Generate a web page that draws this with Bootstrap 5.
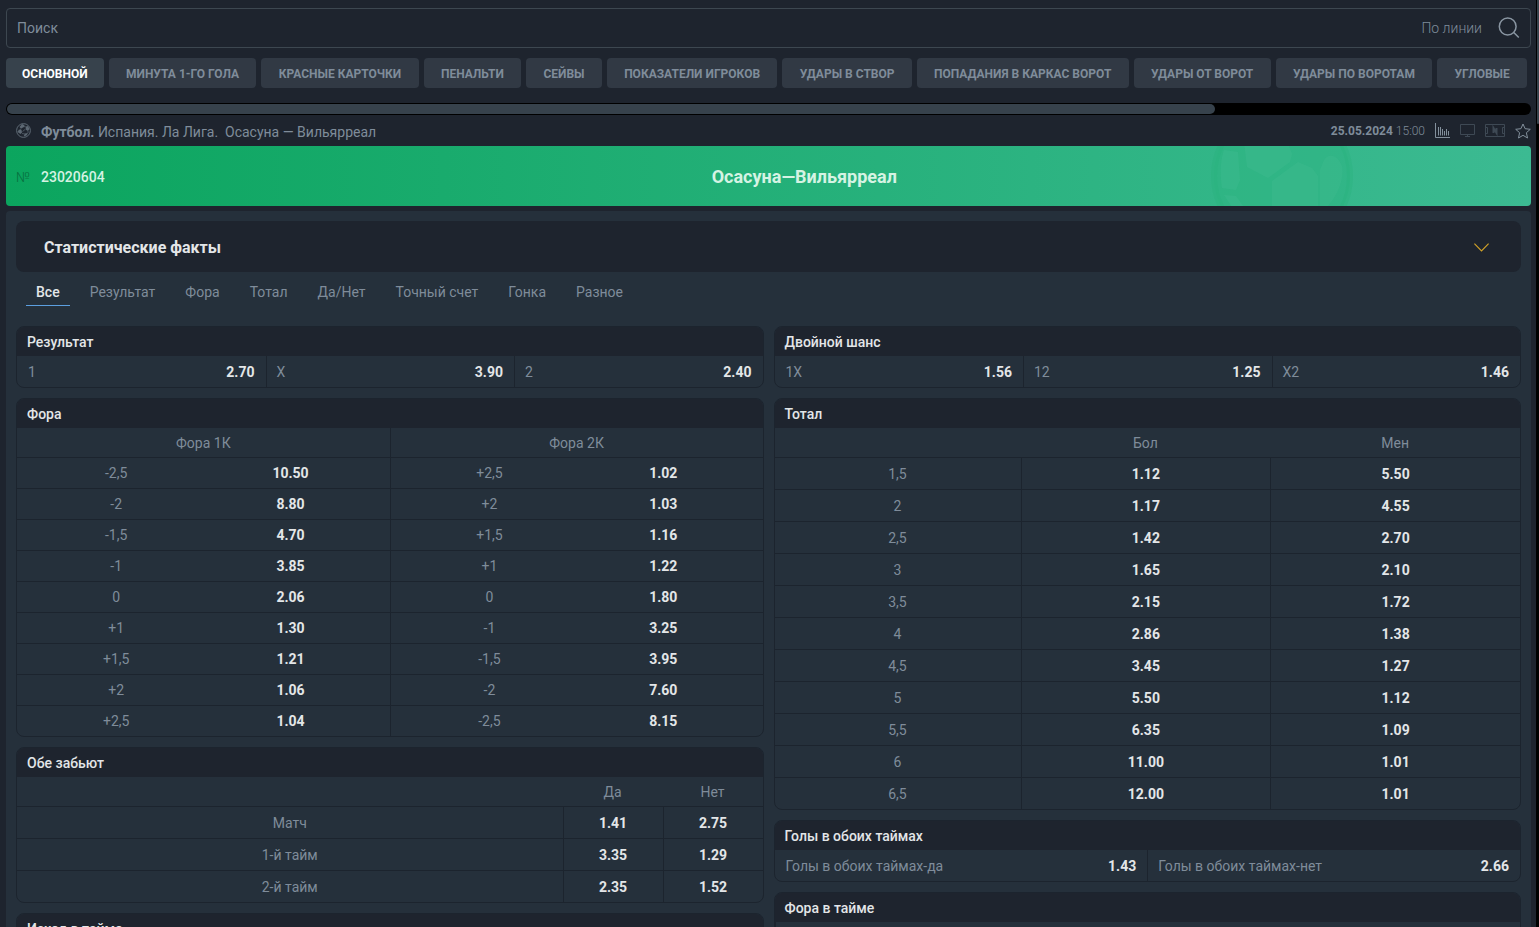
<!DOCTYPE html>
<html lang="ru">
<head>
<meta charset="utf-8">
<meta name="viewport" content="width=device-width, initial-scale=1">
<title>Осасуна — Вильярреал</title>
<link href="https://cdn.jsdelivr.net/npm/bootstrap@5.3.0/dist/css/bootstrap.min.css" rel="stylesheet">
<style>
:root{--page:#1e242e;--panel:#25303b;--line:#1c242e;--muted:#7f8c9a;--bright:#e3e6e8}
body{background:var(--page);color:var(--muted);font-family:Roboto,sans-serif;font-size:14px;line-height:20px}
button{font-family:inherit}
.scroller{overflow-y:auto;scrollbar-width:none;padding:8px 5px 0 6px;min-width:0}
.scroller::-webkit-scrollbar{display:none}
.page-track{flex:none;width:3px;background:#000;padding-left:1px}
.page-thumb{height:124px;background:#37424c;border-radius:0 0 2px 2px}
.search-box{height:40px;border:1px solid #3d4750;border-radius:4px;padding:0 10px}
.search-box input{background:none;border:0;outline:0;color:var(--muted);padding:0}
.search-box input::placeholder{color:var(--muted);opacity:1}
.plain-btn{background:none;border:0;padding:0;color:inherit;display:flex;align-items:center}
.market-tabs{gap:5px;margin-top:10px;padding-right:4px;overflow:hidden}
.market-tabs button{flex:1 0 auto;height:30px;padding:1px 16px 0;border:0;border-radius:4px;background:#313944;color:var(--muted);font-size:12px;font-weight:700;text-transform:uppercase}
.market-tabs button.active{flex-grow:0;background:#37424c;color:#fff}
.tab-track{height:12px;margin-top:15px;padding:1px;background:#000;border-radius:6px}
.tab-thumb{height:10px;background:#37424c;border-radius:5px}
.event-line{height:31px;padding-left:10px;gap:10px}
.event-name{padding-top:2px}
.event-date{font-size:12px}
.banner{height:60px;border-radius:4px;background:linear-gradient(90deg,#0ba55e,#3cba92);padding:2px 27px 0 10px;position:relative;overflow:hidden;color:#d5f3e3}
.banner .num-sign{width:25px;color:#07703f;font-weight:300}
.banner .event-num{font-weight:500}
.banner h1{font-size:18px;line-height:24px;font-weight:700}
.banner svg{position:absolute;right:177px;top:-42px}
.event-panel{background:var(--panel);border-radius:4px;margin-top:5px;padding:10px}
.facts{height:51px;border-radius:8px;background:var(--page);padding:2px 32px 0 28px;width:100%;border:0;color:var(--bright);font-size:16px;font-weight:700}
.filters{gap:10px;margin:10px 10px 20px}
.filters a{height:24px;padding:0 10px;color:var(--muted);text-decoration:none;border-bottom:1px solid transparent}
.filters a.active{color:var(--bright);font-weight:500;border-bottom-color:#5c9fe0}
.columns{--bs-gutter-x:10px}
.stack{row-gap:10px}
.market{border:1px solid var(--line);border-radius:8px;overflow:hidden}
.market h2{height:29px;background:var(--page);color:var(--bright);font-size:14px;font-weight:500;line-height:30px;padding-left:10px;margin:0}
.outcome{flex:1 1 0;height:31px;border:0;border-left:1px solid var(--line);background:none;color:var(--muted);padding:0 11px 0 10px}
.outcome:first-child{border-left:0;padding-left:11px}
.odds{width:100%;table-layout:fixed;text-align:center;border-collapse:separate;border-spacing:0}
.odds th{font-weight:400;padding:0}
.odds td{padding:0;color:var(--bright);font-weight:700}
.outcome b{color:var(--bright);font-weight:700}
.odds thead th{height:30px}
.odds tr>*{height:32px;border-bottom:1px solid var(--line)}
.odds tbody tr:last-child>*{border-bottom:0;height:31px}
.divided tbody td{border-left:1px solid var(--line)}
.handicap tbody tr>*{height:31px}
.handicap tbody tr:last-child>*{height:30px}
.handicap tbody tr>:nth-child(1),.handicap tbody tr>:nth-child(3){padding-left:12px}
.handicap tbody tr>:nth-child(2),.handicap tbody tr>:nth-child(4){padding-right:12px}
.handicap tbody tr>:nth-child(3),.handicap thead th:nth-child(2){border-left:1px solid var(--line)}
.col-odd{width:100px}
.col-line{width:33%}
</style>
</head>
<body>
<div class="d-flex vh-100 overflow-hidden">
<div class="scroller flex-grow-1">
  <form class="search-box d-flex align-items-center">
    <input class="flex-grow-1" type="text" placeholder="Поиск" aria-label="Поиск">
    <button type="button" class="plain-btn fw-light">По линии</button>
    <button type="button" class="plain-btn ms-3" aria-label="Найти"><svg width="22" height="22" viewBox="0 0 22 22" fill="none" stroke="#8995a1" stroke-width="1.5"><circle cx="9.700" cy="9.500" r="8.400"/><path d="M15.800 15.500 20.800 20.500"/></svg></button>
  </form>
  <div class="market-tabs d-flex">
    <button type="button" class="active">Основной</button><button type="button">Минута 1-го гола</button><button type="button">Красные карточки</button><button type="button">Пенальти</button><button type="button">Сейвы</button><button type="button">Показатели игроков</button><button type="button">Удары в створ</button><button type="button">Попадания в каркас ворот</button><button type="button">Удары от ворот</button><button type="button">Удары по воротам</button><button type="button">Угловые</button>
  </div>
  <div class="tab-track"><div class="tab-thumb" style="width:79.3%"></div></div>
  <div class="event-line d-flex align-items-center">
    <svg width="15" height="15" viewBox="0 0 15 15" fill="none" stroke="#5d6873"><circle cx="7.500" cy="7.500" r="6.900"/><path fill="#5d6873" stroke="none" d="M6 1 8.500 2 8 4 5 5.500 3.500 4zM10 3.500 12 3 13.500 6 12 8 9.500 6.500zM3 6.500 5.500 7 6 9.500 4.500 11 1.500 9zM9 10.500l3-.5-1.500 2.500-3 1z"/><path stroke-width=".7" d="M8 3.500 10 4M5 5.500 4.500 7M9 6.500 6.500 8.500M6 10.500 9 11M12 8v2"/></svg>
    <div class="event-name flex-grow-1"><b>Футбол.</b> Испания. Ла Лига.&nbsp; Осасуна — Вильярреал</div>
    <div class="event-date"><b>25.05.2024</b> <span class="fw-light">15:00</span></div>
    <svg width="15" height="15" viewBox="0 0 15 15" fill="none" stroke="#83909c"><path d="M.5 0v14.500H15M3.500 4v8.500M5.500 4v8.500M7.500 6v6.500M9.500 8v4.500M11.500 6v6.500M13.500 8v4.500"/></svg>
    <svg width="15" height="15" viewBox="0 0 15 15" fill="none" stroke="#3e4954"><path d="M.5 1.500h14v10H.5zM5 13.500h5M7.500 11.500v2"/></svg>
    <svg width="20" height="15" viewBox="0 0 20 15" fill="none" stroke="#3e4954"><path d="M.5 1.500h19v12H.5zM.5 4.500h2v6h-2M19.500 4.500h-2v6h2"/><path stroke-width="2" d="M8.500 10V5l3 5V5"/></svg>
    <button type="button" class="plain-btn" aria-label="В избранное"><svg width="16" height="16" viewBox="0 0 16 16" fill="none" stroke="#83909c"><path d="M8 1 10.100 5.700 15.300 6.300 11.400 9.700 12.500 15 8 12.300 3.500 15 4.600 9.700.7 6.300 5.900 5.700z"/></svg></button>
  </div>
  <div class="banner d-flex align-items-center">
    <svg width="144" height="144" viewBox="0 0 144 144" fill="none"><circle cx="72" cy="72" r="68" fill="#2cb481" fill-opacity=".45" stroke="#27b27b" stroke-opacity=".35" stroke-width="6"/><g fill="#3bb98c" fill-opacity=".6"><path d="M34 38 76 34 82 50 80 58 58 74 37 63zM62 77 88 58 102 64 108 72 108 106 92 112 62 106zM114 56C120 48 128 52 132 62 134 72 130 88 118 102L110 104 110 66zM14 46 28 48 30 76 26 86 12 84C10 70 10 58 14 46zM14 91 26 92 36 106 28 112zM30 24C44 12 60 8 78 9L82 25 38 34z"/></g></svg>
    <span class="num-sign">№</span><span class="event-num">23020604</span>
    <h1 class="flex-grow-1 text-center mb-0">Осасуна—Вильярреал</h1>
  </div>
  <main class="event-panel">
    <button type="button" class="facts d-flex align-items-center justify-content-between">Статистические факты <svg width="15" height="9" viewBox="0 0 15 9" fill="none" stroke="#d0a128" stroke-width="1.200"><path d="M.4.6 7.500 7.800 14.600.6"/></svg></button>
    <nav class="filters d-flex">
      <a class="active" href="#">Все</a><a href="#">Результат</a><a href="#">Фора</a><a href="#">Тотал</a><a href="#">Да/Нет</a><a href="#">Точный счет</a><a href="#">Гонка</a><a href="#">Разное</a>
    </nav>
    <div class="row columns">
      <div class="col-6 d-grid align-content-start stack">
        <section class="market"><h2>Результат</h2><div class="d-flex">
          <button class="outcome d-flex align-items-center justify-content-between">1 <b>2.70</b></button><button class="outcome d-flex align-items-center justify-content-between">X <b>3.90</b></button><button class="outcome d-flex align-items-center justify-content-between">2 <b>2.40</b></button></div></section>
        <section class="market"><h2>Фора</h2><table class="odds handicap">
          <thead><tr><th colspan="2">Фора 1К</th><th colspan="2">Фора 2К</th></tr></thead>
          <tbody>
          <tr><th>-2,5</th><td>10.50</td><th>+2,5</th><td>1.02</td></tr>
          <tr><th>-2</th><td>8.80</td><th>+2</th><td>1.03</td></tr>
          <tr><th>-1,5</th><td>4.70</td><th>+1,5</th><td>1.16</td></tr>
          <tr><th>-1</th><td>3.85</td><th>+1</th><td>1.22</td></tr>
          <tr><th>0</th><td>2.06</td><th>0</th><td>1.80</td></tr>
          <tr><th>+1</th><td>1.30</td><th>-1</th><td>3.25</td></tr>
          <tr><th>+1,5</th><td>1.21</td><th>-1,5</th><td>3.95</td></tr>
          <tr><th>+2</th><td>1.06</td><th>-2</th><td>7.60</td></tr>
          <tr><th>+2,5</th><td>1.04</td><th>-2,5</th><td>8.15</td></tr>
          </tbody></table></section>
        <section class="market"><h2>Обе забьют</h2><table class="odds divided">
          <colgroup><col><col class="col-odd"><col class="col-odd"></colgroup>
          <thead><tr><th></th><th>Да</th><th>Нет</th></tr></thead>
          <tbody>
          <tr><th>Матч</th><td>1.41</td><td>2.75</td></tr>
          <tr><th>1-й тайм</th><td>3.35</td><td>1.29</td></tr>
          <tr><th>2-й тайм</th><td>2.35</td><td>1.52</td></tr>
          </tbody></table></section>
        <section class="market"><h2>Исход в тайме</h2></section>
      </div>
      <div class="col-6 d-grid align-content-start stack">
        <section class="market"><h2>Двойной шанс</h2><div class="d-flex">
          <button class="outcome d-flex align-items-center justify-content-between">1X <b>1.56</b></button><button class="outcome d-flex align-items-center justify-content-between">12 <b>1.25</b></button><button class="outcome d-flex align-items-center justify-content-between">X2 <b>1.46</b></button></div></section>
        <section class="market"><h2>Тотал</h2><table class="odds divided">
          <colgroup><col class="col-line"><col><col></colgroup>
          <thead><tr><th></th><th>Бол</th><th>Мен</th></tr></thead>
          <tbody>
          <tr><th>1,5</th><td>1.12</td><td>5.50</td></tr>
          <tr><th>2</th><td>1.17</td><td>4.55</td></tr>
          <tr><th>2,5</th><td>1.42</td><td>2.70</td></tr>
          <tr><th>3</th><td>1.65</td><td>2.10</td></tr>
          <tr><th>3,5</th><td>2.15</td><td>1.72</td></tr>
          <tr><th>4</th><td>2.86</td><td>1.38</td></tr>
          <tr><th>4,5</th><td>3.45</td><td>1.27</td></tr>
          <tr><th>5</th><td>5.50</td><td>1.12</td></tr>
          <tr><th>5,5</th><td>6.35</td><td>1.09</td></tr>
          <tr><th>6</th><td>11.00</td><td>1.01</td></tr>
          <tr><th>6,5</th><td>12.00</td><td>1.01</td></tr>
          </tbody></table></section>
        <section class="market"><h2>Голы в обоих таймах</h2><div class="d-flex">
          <button class="outcome d-flex align-items-center justify-content-between">Голы в обоих таймах-да <b>1.43</b></button><button class="outcome d-flex align-items-center justify-content-between">Голы в обоих таймах-нет <b>2.66</b></button></div></section>
        <section class="market"><h2>Фора в тайме</h2><div class="outcome"></div></section>
      </div>
    </div>
  </main>
</div>
<div class="page-track"><div class="page-thumb"></div></div>
</div>
<script src="https://cdn.jsdelivr.net/npm/bootstrap@5.3.0/dist/js/bootstrap.bundle.min.js"></script>
</body>
</html>
